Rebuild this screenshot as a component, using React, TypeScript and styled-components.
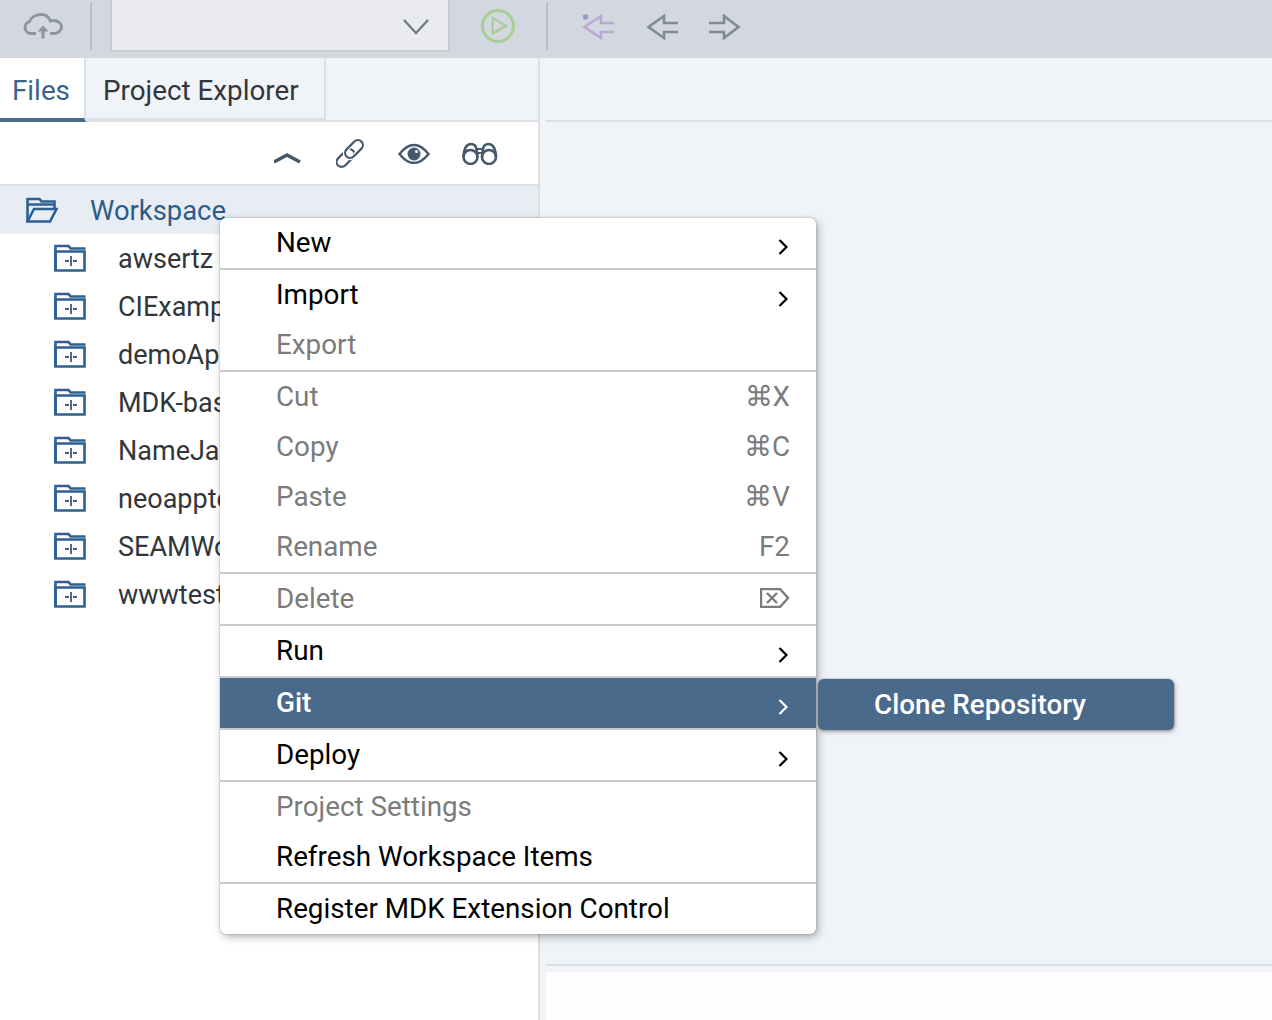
import React from "react";
import styled, { createGlobalStyle } from "styled-components";

const FONT = `Roboto, "Liberation Sans", sans-serif`;

const GlobalStyle = createGlobalStyle`
  html, body {
    margin: 0;
    padding: 0;
    height: 1020px;
    overflow: hidden;
    background: #ffffff;
    font-family: ${FONT};
  }
`;

interface IconProps {
  w: number;
  h: number;
  color?: string;
  sw?: number;
  children: React.ReactNode;
}

const Icon = ({ w, h, color = "#46586b", sw = 2.4, children }: IconProps) => (
  <svg width={w} height={h} viewBox={`0 0 ${w} ${h}`} fill="none" stroke={color} strokeWidth={sw}>
    {children}
  </svg>
);

const FolderPlus = () => (
  <Icon w={32} h={28} color="#2c6092" sw={2.6}>
    <path d="M1.500 27V2h13l2 2.500h15" />
    <path d="M1.500 7.500h29v19h-29z" />
    <path d="M17 12v10" strokeWidth={1.8} stroke="#3f5a75" />
    <path d="M11 17h4M19 17h4" strokeWidth={2} stroke="#3f5a75" />
  </Icon>
);

const FolderOpen = () => (
  <Icon w={32} h={26} color="#2c6092" sw={2.6}>
    <path d="M1.500 25V2h12l2 2.500h13V12M1.500 7.500h27" />
    <path d="M1.500 24.500L8 12h22.500l-6.500 12.500z" />
  </Icon>
);

const Chevron = ({ light }: { light?: boolean }) => (
  <Icon w={10} h={16} color={light ? "#ffffff" : "#000000"} sw={2.2}>
    <path d="M1.500 1L8.500 8l-7 7" />
  </Icon>
);

const folders = ["awsertz", "CIExample", "demoApp", "MDK-base", "NameJava", "neoapptest", "SEAMWork", "wwwtest"];

type MenuEntry = {
  label: string;
  off?: boolean;
  sub?: boolean;
  keys?: string;
  del?: boolean;
  active?: boolean;
};

const menuGroups: MenuEntry[][] = [
  [{ label: "New", sub: true }],
  [{ label: "Import", sub: true }, { label: "Export", off: true }],
  [
    { label: "Cut", off: true, keys: "⌘X" },
    { label: "Copy", off: true, keys: "⌘C" },
    { label: "Paste", off: true, keys: "⌘V" },
    { label: "Rename", off: true, keys: "F2" },
  ],
  [{ label: "Delete", off: true, del: true }],
  [{ label: "Run", sub: true }],
  [{ label: "Git", sub: true, active: true }],
  [{ label: "Deploy", sub: true }],
  [{ label: "Project Settings", off: true }, { label: "Refresh Workspace Items" }],
  [{ label: "Register MDK Extension Control" }],
];

const App = () => {
  return (
    <Page>
      <GlobalStyle />
      <Toolbar>
        <CloudSlot>
          <Icon w={40} h={26} color="#8b96a1" sw={2.8}>
            <path d="M13 20.500H8a6 6 0 0 1-1.500-11.800C8 4 13 1.500 18 1.500c4.500 0 8 2.500 9.500 6.500 1-.5 2-.5 3-.5 4.500 0 8 3 8 6.500s-3.500 6.500-8 6.500H27" />
            <path d="M20 25.500V15" strokeWidth={3.2} />
            <path d="M14.500 18.500L20 12.500l5.500 6z" fill="#8b96a1" stroke="none" />
          </Icon>
        </CloudSlot>
        <ToolSep />
        <RunSelect>
          <Icon w={26} h={16} color="#6f7b88">
            <path d="M1 1l12 13L25 1" />
          </Icon>
        </RunSelect>
        <PlaySlot>
          <Icon w={36} h={36} color="#a8cd95" sw={3}>
            <circle cx={18} cy={18} r={15.500} />
            <path d="M12.700 10L26 18l-13.300 7.500z" strokeWidth={2.2} />
          </Icon>
        </PlaySlot>
        <ToolSep />
        <ArrowGroup>
          <Icon w={34} h={26} color="#b9a9d4" sw={2.6}>
            <path d="M33 9H20V2L3.500 13 20 24v-6h13" />
            <path d="M4.500 0v6M2 1.500l5 3M7 1.500l-5 3" strokeWidth={1.8} stroke="#a892cc" />
          </Icon>
          <Icon w={32} h={26} color="#7f8b97" sw={2.6}>
            <path d="M32 9H18V2L2.500 13 18 24v-6h14" />
          </Icon>
          <Icon w={32} h={26} color="#7f8b97" sw={2.6}>
            <path d="M0 9h15V2l14.500 11L15 24v-6H0" />
          </Icon>
        </ArrowGroup>
      </Toolbar>

      <Main>
        <LeftPane>
          <TabBar>
            <Tab $active>Files</Tab>
            <Tab>Project Explorer</Tab>
          </TabBar>
          <Actions>
            <Icon w={30} h={22} sw={3.6}>
              <path d="M0 20L13 13l13 7" />
            </Icon>
            <Icon w={30} h={30} sw={2.2}>
              <rect x={-1} y={15} width={21} height={10} rx={5} transform="rotate(-45 9.5 20)" />
              <rect x={7.500} y={6} width={21} height={10} rx={5} transform="rotate(-45 18 11)" stroke="#ffffff" strokeWidth={4.5} />
              <rect x={7.500} y={6} width={21} height={10} rx={5} transform="rotate(-45 18 11)" />
            </Icon>
            <Icon w={32} h={22}>
              <path d="M1.500 12C7 5 11.500 3 16 3s9 2 14.500 9C25 19 20.500 21 16 21S7 19 1.500 12z" />
              <circle cx={16} cy={12} r={6.500} fill="#46586b" stroke="none" />
              <circle cx={18.500} cy={9.500} r={1.500} fill="#ffffff" stroke="none" />
            </Icon>
            <Icon w={36} h={24} sw={2.6}>
              <circle cx={8.500} cy={16} r={7} />
              <circle cx={27} cy={16} r={7} />
              <path d="M1.500 16C2 7 5 3 9 3c3 0 5 2 5.500 5l1 8M34 16c-.5-9-3.500-13-7.500-13-3 0-5 2-5.500 5l-1 8" />
              <path d="M14.500 8h6.500M15 12h5.500" strokeWidth={2} />
            </Icon>
          </Actions>
          <WorkspaceRow>
            <FolderOpen />
            <TreeLabel>Workspace</TreeLabel>
          </WorkspaceRow>
          {folders.map((name) => (
            <FolderRow key={name}>
              <FolderPlus />
              <TreeLabel>{name}</TreeLabel>
            </FolderRow>
          ))}
        </LeftPane>

        <RightPane>
          <RightHead />
          <RightBody />
          <RightFoot />
        </RightPane>

        <Menu>
          {menuGroups.map((group, i) => (
            <MenuGroup key={i}>
              {group.map((item) => (
                <MenuItem key={item.label} $off={item.off} $active={item.active}>
                  <span>{item.label}</span>
                  {item.keys && <span>{item.keys}</span>}
                  {item.sub && <ChevronSlot><Chevron light={item.active} /></ChevronSlot>}
                  {item.del && (
                    <DeleteSlot>
                      <Icon w={30} h={20} color="#7b7b7b">
                        <path d="M1 1h19l8 9-8 9H1zM7 5l10 10M17 5L7 15" />
                      </Icon>
                    </DeleteSlot>
                  )}
                </MenuItem>
              ))}
            </MenuGroup>
          ))}
        </Menu>
        <SubMenu>Clone Repository</SubMenu>
      </Main>
    </Page>
  );
};

const Page = styled.div`
  width: 1272px;
  height: 1020px;
  display: flex;
  flex-direction: column;
  overflow: hidden;
`;

const Toolbar = styled.div`
  height: 58px;
  flex: none;
  background: #d3d7e0;
  display: flex;
  align-items: flex-start;
`;

const CloudSlot = styled.div`
  width: 90px;
  padding: 13px 0 0 23px;
  box-sizing: border-box;
`;

const ToolSep = styled.div`
  width: 2px;
  height: 48px;
  margin-top: 2px;
  background: #bcc0c6;
`;

const RunSelect = styled.div`
  width: 340px;
  height: 52px;
  margin-left: 18px;
  box-sizing: border-box;
  background: #e9ebef;
  border: 2px solid #c9cbcf;
  border-top: 0;
  display: flex;
  justify-content: flex-end;
  align-items: center;
  padding: 4px 19px 0 0;
`;

const PlaySlot = styled.div`
  width: 96px;
  padding: 8px 0 0 30px;
  box-sizing: border-box;
`;

const ArrowGroup = styled.div`
  display: flex;
  gap: 31px;
  margin-left: 33px;
  padding-top: 14px;
  align-items: center;
`;

const Main = styled.div`
  flex: 1;
  display: flex;
  position: relative;
  min-height: 0;
`;

const LeftPane = styled.div`
  width: 540px;
  flex: none;
  box-sizing: border-box;
  border-right: 2px solid #dcdfe5;
  background: #ffffff;
`;

const TabBar = styled.div`
  height: 64px;
  box-sizing: border-box;
  background: #f0f3f8;
  border-bottom: 2px solid #dcdfe5;
  display: flex;
`;

const Tab = styled.div<{ $active?: boolean }>`
  height: 64px;
  flex: none;
  box-sizing: border-box;
  font-size: 27.8px;
  white-space: nowrap;
  display: flex;
  align-items: center;
  padding: 4px 0 0 ${(p) => (p.$active ? "12px" : "17px")};
  width: ${(p) => (p.$active ? "86px" : "240px")};
  color: ${(p) => (p.$active ? "#3c6288" : "#32363a")};
  background: ${(p) => (p.$active ? "#ffffff" : "#f0f3f8")};
  border-bottom: 4px solid ${(p) => (p.$active ? "#4a6a8c" : "#dcdfe5")};
  border-right: 2px solid #dcdfe5;
`;

const Actions = styled.div`
  height: 64px;
  box-sizing: border-box;
  border-bottom: 2px solid #dcdfe5;
  display: flex;
  justify-content: flex-end;
  align-items: center;
  gap: 32px;
  padding: 0 40px 0 0;
`;

const WorkspaceRow = styled.div`
  height: 48px;
  background: #e8edf4;
  color: #2b5c8c;
  font-size: 27.4px;
  display: flex;
  align-items: center;
  gap: 32px;
  padding-left: 26px;
`;

const FolderRow = styled.div`
  height: 48px;
  color: #32363a;
  font-size: 27px;
  display: flex;
  align-items: center;
  gap: 32px;
  padding-left: 54px;
  white-space: nowrap;
`;

const TreeLabel = styled.span`
  padding-top: 2px;
`;

const RightPane = styled.div`
  flex: 1;
  display: flex;
  flex-direction: column;
  background: #f0f3f8;
`;

const RightHead = styled.div`
  height: 64px;
  box-sizing: border-box;
  margin-left: 6px;
  border-bottom: 2px solid #dcdfe5;
`;

const RightBody = styled.div`
  flex: 1;
  margin-left: 6px;
  border-bottom: 2px solid #dcdfe5;
`;

const RightFoot = styled.div`
  height: 48px;
  margin: 6px 0 0 6px;
  background: #fdfdfe;
`;

const Menu = styled.div`
  position: absolute;
  left: 220px;
  top: 160px;
  width: 596px;
  background: #ffffff;
  border-radius: 6px;
  box-shadow: 0 0 2px rgba(0, 0, 0, 0.3), 2px 3px 8px rgba(0, 0, 0, 0.3);
  overflow: hidden;
`;

const MenuGroup = styled.div`
  & + & {
    border-top: 2px solid #cccccc;
  }
`;

const MenuItem = styled.div<{ $off?: boolean; $active?: boolean }>`
  height: 50px;
  box-sizing: border-box;
  padding: 0 26px 2px 56px;
  display: flex;
  justify-content: space-between;
  align-items: center;
  font-size: 27.8px;
  color: ${(p) => (p.$active ? "#ffffff" : p.$off ? "#7b7b7b" : "#000000")};
  background: ${(p) => (p.$active ? "#4a6a8c" : "transparent")};
  font-weight: ${(p) => (p.$active ? 500 : 400)};
`;

const ChevronSlot = styled.span`
  display: flex;
  padding: 10px 2px 0 0;
`;

const DeleteSlot = styled.span`
  display: flex;
`;

const SubMenu = styled.div`
  position: absolute;
  left: 818px;
  top: 621px;
  width: 356px;
  height: 51px;
  box-sizing: border-box;
  padding: 0 0 1px 56px;
  display: flex;
  align-items: center;
  background: #4a6a8c;
  color: #ffffff;
  font-size: 27.8px;
  font-weight: 500;
  border-radius: 6px;
  box-shadow: 0 0 2px rgba(0, 0, 0, 0.4), 1px 2px 4px rgba(0, 0, 0, 0.3);
`;

export default App;
